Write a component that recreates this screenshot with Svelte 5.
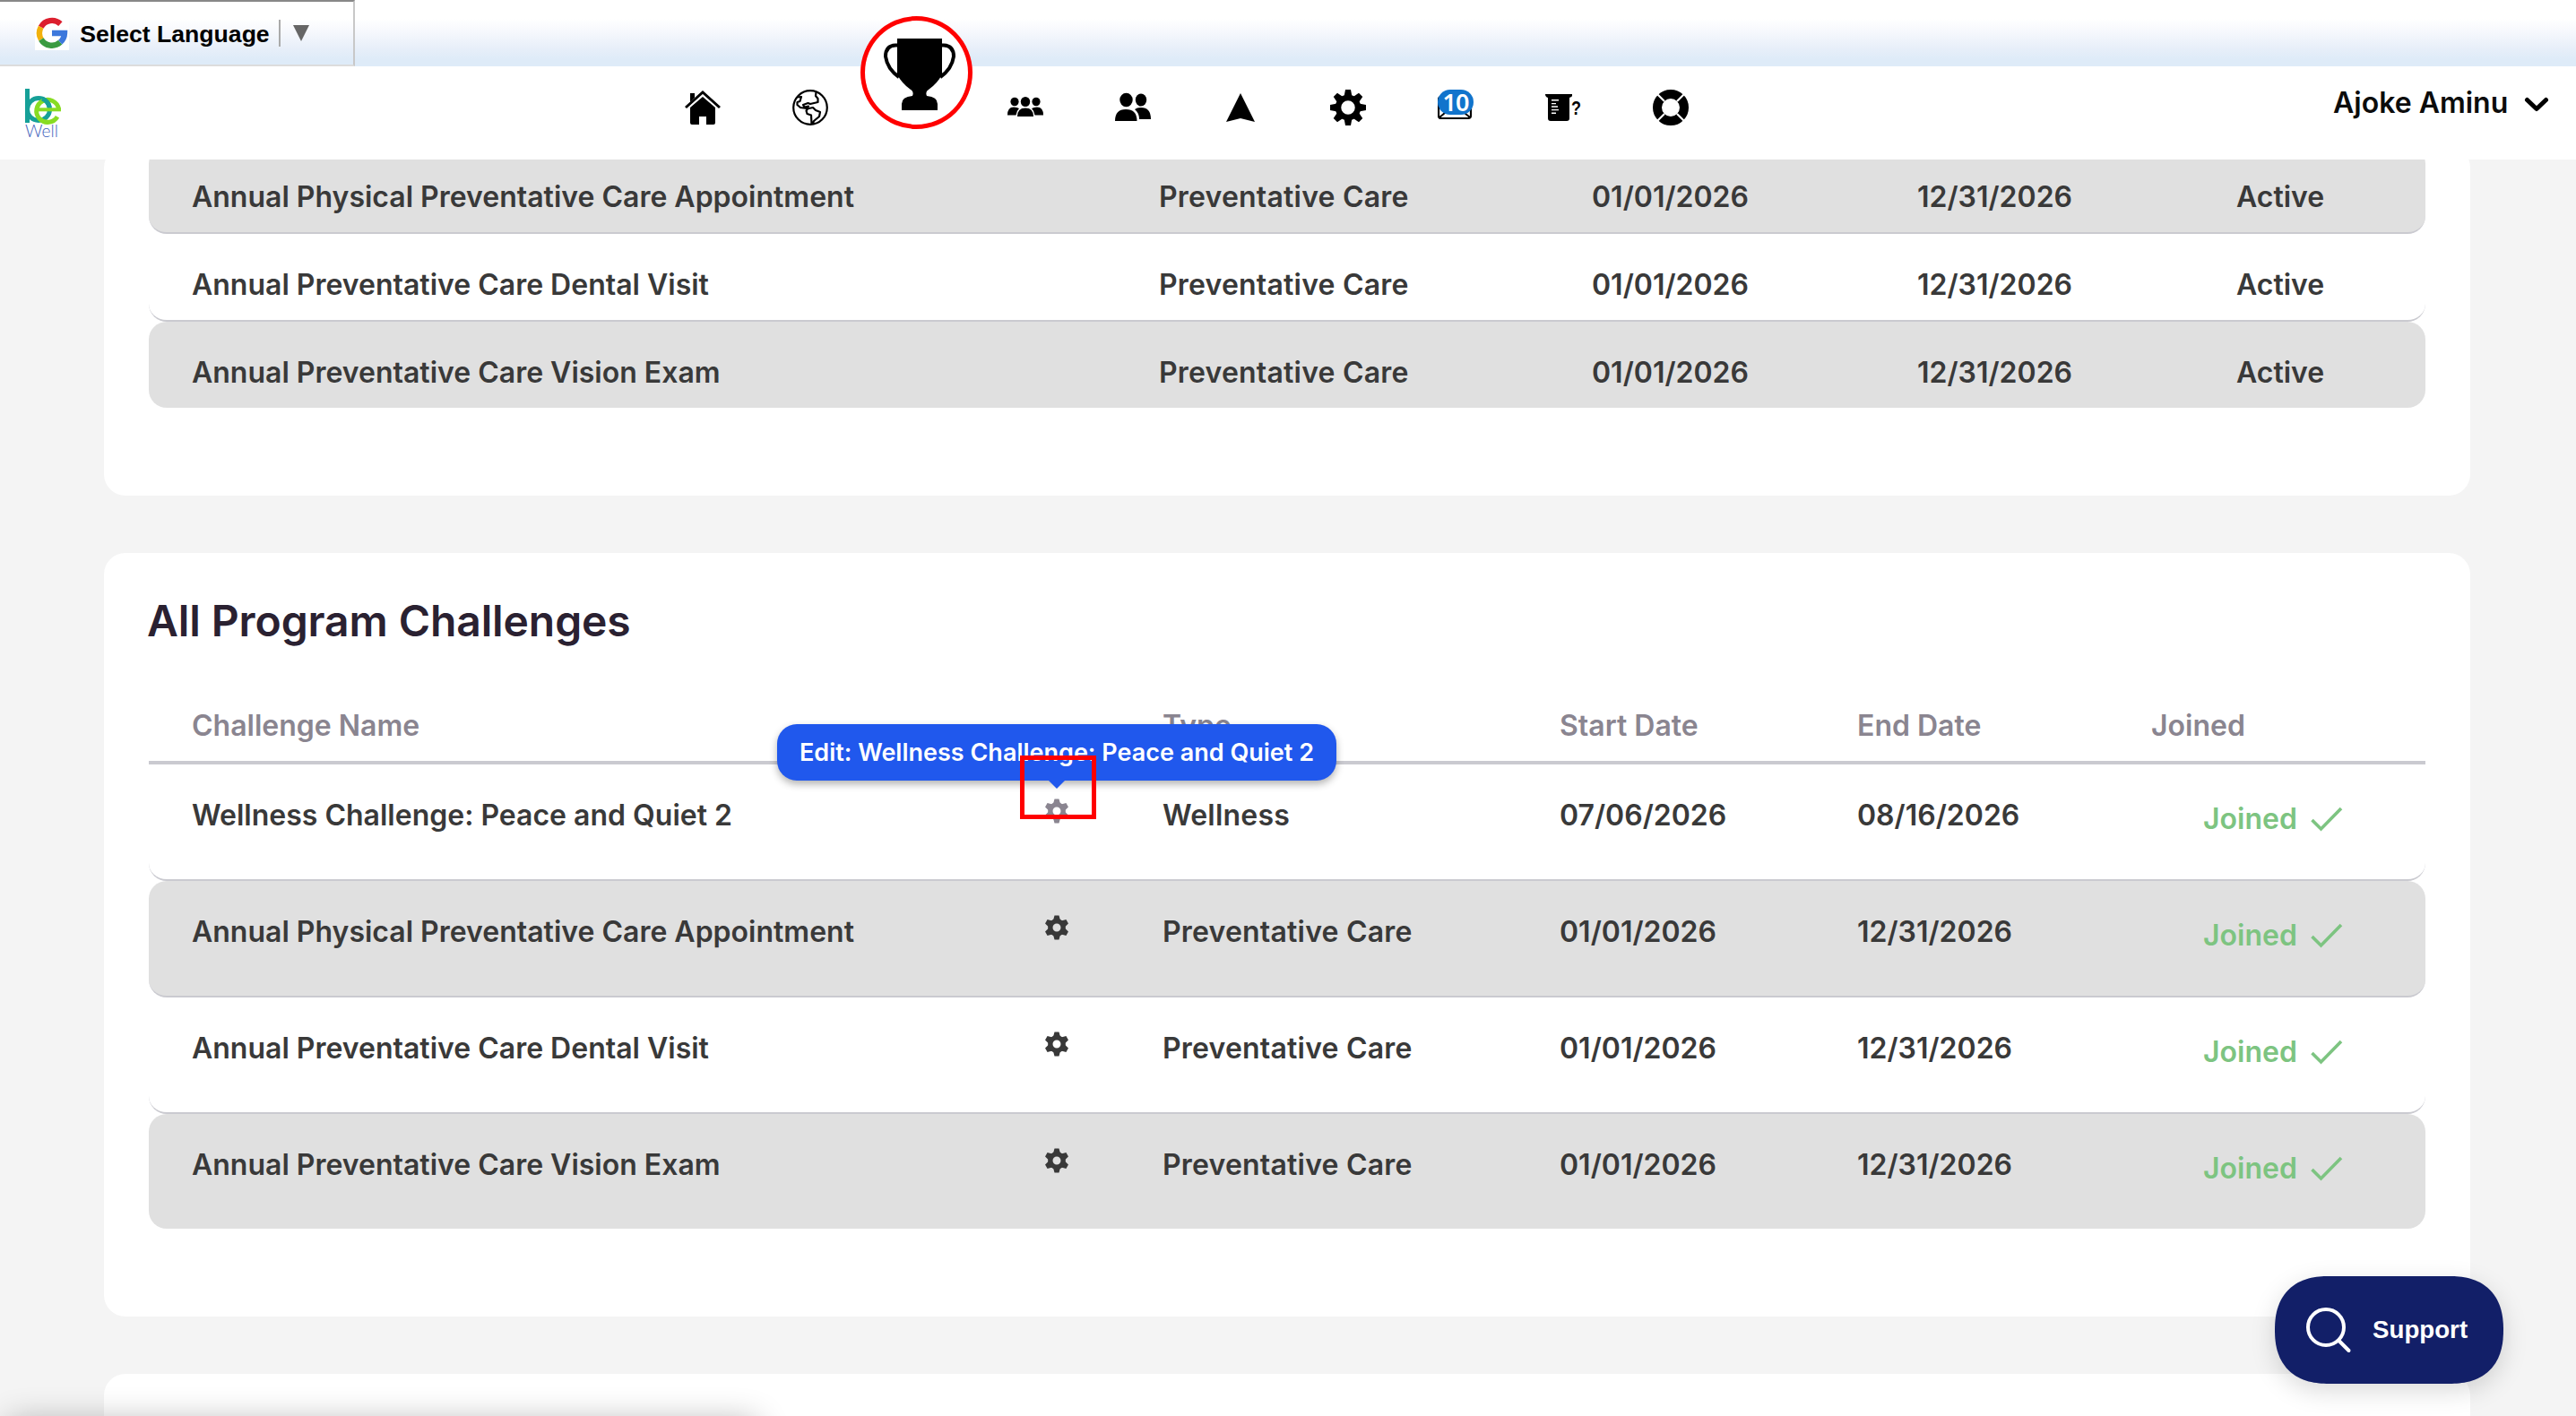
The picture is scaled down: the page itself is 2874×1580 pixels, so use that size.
<script>

    // Rows of the table that is scrolled under the header
    const current = [
        { name: "Annual Physical Preventative Care Appointment", type: "Preventative Care", start: "01/01/2026", end: "12/31/2026", status: "Active" },
        { name: "Annual Preventative Care Dental Visit", type: "Preventative Care", start: "01/01/2026", end: "12/31/2026", status: "Active" },
        { name: "Annual Preventative Care Vision Exam", type: "Preventative Care", start: "01/01/2026", end: "12/31/2026", status: "Active" }
    ];

    // Rows of the program table
    const challenges = [
        { name: "Wellness Challenge: Peace and Quiet 2", type: "Wellness", start: "07/06/2026", end: "08/16/2026", hovered: true },
        { name: "Annual Physical Preventative Care Appointment", type: "Preventative Care", start: "01/01/2026", end: "12/31/2026" },
        { name: "Annual Preventative Care Dental Visit", type: "Preventative Care", start: "01/01/2026", end: "12/31/2026" },
        { name: "Annual Preventative Care Vision Exam", type: "Preventative Care", start: "01/01/2026", end: "12/31/2026" }
    ];

    const gearTeeth = [0, 45, 90, 135, 180, 225, 270, 315];
    const cogTeeth = [0, 60, 120, 180, 240, 300];

</script>

<div class="page">

    <!-- Language bar -->
    <div class="language-bar">
        <button class="translate">
            <svg class="google" width="38" height="38" viewBox="0 0 38 38">
                <rect width="38" height="38" fill="#fff" />
                <g fill="none" stroke-width="6.4">
                    <path d="M28.4 8.6A14 14 0 0 0 6.7 12.2" stroke="#dc1f2e" />
                    <path d="M6.7 12.2A14 14 0 0 0 6.9 26" stroke="#f2b10c" />
                    <path d="M6.9 26A14 14 0 0 0 28.2 29.2" stroke="#3a9b41" />
                    <path d="M28.2 29.2A14 14 0 0 0 33 19H19" stroke="#3d78dc" />
                </g>
            </svg>
            <span class="label">Select Language</span>
            <span class="divider"></span>
            <svg width="18" height="18" viewBox="0 0 18 18"><path d="M0 0H18L9 18Z" fill="#666" /></svg>
        </button>
    </div>

    <!-- Header -->
    <header>

        <svg class="logo" width="44" height="58" viewBox="0 0 44 58">
            <g fill="none" stroke-width="5">
                <path d="M2.500 1V39" stroke="#16a098" />
                <circle cx="15" cy="24" r="12.500" stroke="#16a098" />
                <path d="M36 32.200A12.500 12.500 0 1 1 37.500 23.500" stroke="#88dc22" />
                <path d="M14 24.300H40" stroke="#88dc22" stroke-width="4" />
                <path d="M19 12.200A12.500 12.500 0 0 1 27.200 21.500" stroke="#16a098" />
            </g>
            <text x="0" y="54.500" textLength="37" lengthAdjust="spacingAndGlyphs">Well</text>
        </svg>

        <nav>

            <!-- Home -->
            <svg viewBox="0 0 40 40">
                <path d="M6 4h5v5l-5 5z" />
                <path d="M1 20L20 3L39 20" fill="none" stroke="#000" stroke-width="3" />
                <path d="M6 20L20 8L34 20V37Q34 39 32 39H24V30H16V39H8Q6 39 6 37Z" />
            </svg>

            <!-- Globe -->
            <svg viewBox="0 0 40 40">
                <g fill="none" stroke="#000" stroke-width="2.200" stroke-linejoin="round">
                    <circle cx="20" cy="20" r="18.800" />
                    <path d="M26.500 3L26 7L28.500 10V14L20 16L17.500 15L12 17L13.500 19.500L18 18.500L16 21L9 20L5.500 17V14L8.500 13L10 8L5 8.500" />
                    <path d="M16 21.500L23 20L26 23L31 25L30 30L24 35L22.500 38.500M21.500 38.500L21 28.500L16.500 27L15.500 23.500L17.500 21" />
                </g>
            </svg>

            <!-- Trophy -->
            <div class="highlight">
                <svg class="trophy" viewBox="0 0 80 80">
                    <path d="M15 0H65V40Q60 50 50 57Q46 59 48 64Q60 65 60 73V80H20V73Q20 65 32 64Q34 59 30 57Q20 50 15 40Z" />
                    <g fill="none" stroke="#000" stroke-width="4">
                        <path d="M17 7.500H13Q2 8 2 20Q4 34 17 43" />
                        <path d="M63 7.500H67Q78 8 78 20Q76 34 63 43" />
                    </g>
                </svg>
            </div>

            <!-- Teams -->
            <svg viewBox="0 0 40 40">
                <ellipse cx="8" cy="13.500" rx="4.600" ry="4.800" />
                <ellipse cx="32" cy="13.500" rx="4.600" ry="4.800" />
                <ellipse cx="20" cy="13.500" rx="5.200" ry="5.600" />
                <path d="M0 28.500Q0 19.500 7 19.500Q11 19.500 13 21Q10 24 9.500 28.500Z" />
                <path d="M40 28.500Q40 19.500 33 19.500Q29 19.500 27 21Q30 24 30.500 28.500Z" />
                <path d="M11 30Q11 20.500 20 20.500Q29 20.500 29 30Z" />
            </svg>

            <!-- Friends -->
            <svg viewBox="0 0 40 40">
                <ellipse cx="12.500" cy="11.500" rx="7.200" ry="7.800" />
                <ellipse cx="29" cy="11.500" rx="6.200" ry="7" />
                <path d="M0 35Q0 22 12 22Q24.500 22 24.500 35Z" />
                <path d="M22 22Q25 20 29 20Q40 20 40 33H27Q27 26 22 22Z" />
            </svg>

            <!-- Navigate -->
            <svg viewBox="0 0 40 40"><path d="M20 4L36 36L20 32L4 36Z" /></svg>

            <!-- Settings -->
            <svg viewBox="0 0 40 40">
                {#each gearTeeth as angle}
                    <path d="M15.500 8L17 0H23L24.500 8Z" transform="rotate({angle} 20 20)" />
                {/each}
                <circle cx="20" cy="20" r="11" fill="none" stroke="#000" stroke-width="6.500" />
            </svg>

            <!-- Messages -->
            <div class="messages">
                <svg viewBox="0 0 40 40">
                    <rect x="1" y="8" width="36" height="24" rx="3" fill="#fff" stroke="#000" stroke-width="2.200" />
                    <path d="M2 31L14 21M36 31L24 21" stroke="#000" stroke-width="2" />
                </svg>
                <span class="count">10</span>
            </div>

            <!-- Measurements -->
            <svg viewBox="0 0 40 40">
                <path d="M0 5H30V7Q30 8 27 9V32Q27 35 24 35H6Q3 35 3 32V9Q0 8 0 5Z" />
                <path d="M7 11.800H15M7 15.600H12M7 19H14M7 22.600H15M7 26.200H12" stroke="#fff" stroke-width="1.400" />
                <text class="question" x="29" y="28" textLength="11" lengthAdjust="spacingAndGlyphs">?</text>
            </svg>

            <!-- Help -->
            <svg viewBox="0 0 40 40">
                <circle cx="20" cy="20" r="15" fill="none" stroke="#000" stroke-width="10" />
                <path d="M5 5L13 13M35 5L27 13M5 35L13 27M35 35L27 27" stroke="#fff" stroke-width="2.200" />
            </svg>

        </nav>

        <!-- User menu -->
        <button class="user">
            <span>Ajoke Aminu</span>
            <svg width="28" height="18" viewBox="0 0 28 18"><path d="M3.500 3.500L14 13.500L24.500 3.500" fill="none" stroke="#000" stroke-width="5" stroke-linecap="round" stroke-linejoin="round" /></svg>
        </button>

    </header>

    <main>

        <!-- Current challenges -->
        <section class="card current">
            {#each current as item}
                <div class="row">
                    <span class="name">{item.name}</span>
                    <span class="type">{item.type}</span>
                    <span>{item.start}</span>
                    <span>{item.end}</span>
                    <span>{item.status}</span>
                </div>
            {/each}
        </section>

        <!-- All challenges -->
        <section class="card program">

            <h2>All Program Challenges</h2>

            <div class="row head">
                <span class="name">Challenge Name</span>
                <span></span>
                <span>Type</span>
                <span>Start Date</span>
                <span>End Date</span>
                <span>Joined</span>
            </div>

            {#each challenges as item}
                <div class="row">
                    <span class="name">{item.name}</span>
                    <span class="edit" class:hovered={item.hovered}>
                        <svg width="28" height="28" viewBox="0 0 28 28">
                            {#each cogTeeth as angle}
                                <path d="M10 6L11.500 .500H16.500L18 6Z" transform="rotate({angle} 14 14)" />
                            {/each}
                            <circle cx="14" cy="14" r="7.200" fill="none" stroke="currentColor" stroke-width="5.400" />
                        </svg>
                        {#if item.hovered}
                            <span class="tooltip">Edit: {item.name}</span>
                            <span class="marker"></span>
                        {/if}
                    </span>
                    <span class="type">{item.type}</span>
                    <span>{item.start}</span>
                    <span>{item.end}</span>
                    <span class="joined">
                        Joined
                        <svg width="36" height="28" viewBox="0 0 36 28"><path d="M1.500 15L11.500 25L34 2" fill="none" stroke="currentColor" stroke-width="3.600" /></svg>
                    </span>
                </div>
            {/each}

        </section>

        <!-- Next card -->
        <section class="card next"></section>

    </main>

    <!-- Shade at the bottom edge -->
    <div class="bottom-shade"></div>

    <!-- Support -->
    <button class="support">
        <svg width="54" height="54" viewBox="0 0 54 54">
            <circle cx="24" cy="24" r="20" />
            <path d="M38.500 39L49.500 50" />
        </svg>
        <span>Support</span>
    </button>

</div>

<style>

    :global(body) {
        background: #f4f4f4;
    }

    button {
        border: 0;
        padding: 0;
        background: none;
        font: inherit;
        color: inherit;
    }

    .page {
        position: relative;
        width: 2874px;
        height: 1580px;
        overflow: hidden;
        display: flex;
        flex-direction: column;
        background: #f4f4f4;
        color: #393939;
        font: 600 32px/40px Inter, "Noto Sans", sans-serif;
    }

    /* Language bar */
    .language-bar {
        height: 74px;
        background: linear-gradient(#fff 28%, #f7f9fd 46%, #e8eff9 72%, #deebf8 90%);
    }

    .translate {
        display: flex;
        align-items: center;
        box-sizing: border-box;
        width: 396px;
        height: 74px;
        padding-left: 39px;
        border: 2px solid #888;
        border-left: 0;
        border-color: #888 #c8c8c8 #dcdcdc;
    }

    .label {
        width: 212px;
        margin-left: 12px;
        padding-top: 2px;
        color: #000;
        font: bold 26.600px/40px "Liberation Sans", Arial, sans-serif;
        white-space: nowrap;
    }

    .divider {
        width: 2px;
        height: 30px;
        margin: 0 14px 0 10px;
        background: #aaa;
    }

    /* Header */
    header {
        display: flex;
        height: 104px;
        flex: none;
        background: #fff;
    }

    .logo {
        margin: 24px 0 0 28px;
    }

    .logo text {
        font: 300 20px Lato, sans-serif;
        fill: #3f63bd;
    }

    nav {
        display: flex;
        gap: 80px;
        margin: 26px 0 0 692px;
        height: 40px;
    }

    nav svg {
        width: 40px;
        height: 40px;
        display: block;
    }

    /* Active item is enlarged and circled */
    .highlight {
        position: relative;
        top: -82px;
        box-sizing: border-box;
        width: 125px;
        height: 126px;
        margin: 0 -41px 0 -44px;
        border: 5px solid #f00;
        border-radius: 50%;
        background: #fff;
    }

    .highlight .trophy {
        width: 80px;
        height: 80px;
        margin: 20px 0 0 21px;
    }

    .messages {
        position: relative;
    }

    .count {
        position: absolute;
        top: 0;
        left: 0;
        width: 40px;
        height: 28px;
        border-radius: 14px;
        background: #1174cc;
        color: #fff;
        text-align: center;
        letter-spacing: -1px;
        font: 600 27px/28px "Noto Sans", sans-serif;
    }

    .question {
        font: bold 22px "Liberation Sans", sans-serif;
    }

    .user {
        display: flex;
        align-items: flex-start;
        margin-left: auto;
        padding: 21px 30px 0 0;
        color: #0c0c0c;
    }

    .user span {
        width: 213px;
        text-align: left;
        white-space: nowrap;
    }

    .user svg {
        margin-top: 13px;
    }

    /* Cards */
    main {
        flex: 1;
        overflow: hidden;
        padding: 0 118px 0 116px;
    }

    .card {
        box-sizing: border-box;
        padding: 0 50px;
        margin-bottom: 64px;
        border-radius: 24px;
        background: #fff;
    }

    .current {
        height: 390px;
        margin-top: -15px;
    }

    .program {
        height: 852px;
    }

    .next {
        height: 200px;
    }

    h2 {
        margin: 0 0 0 -2px;
        padding: 46px 0 0;
        height: 126px;
        line-height: 60px;
        font-size: 48px;
        font-weight: 600;
        letter-spacing: -.1px;
        color: #2a2131;
    }

    /* Rows */
    .row {
        display: grid;
        box-sizing: border-box;
        padding-top: 37px;
        border-bottom: 2px solid #cacad0;
        border-radius: 20px;
        white-space: nowrap;
    }

    .row:last-child {
        border-bottom: 0;
    }

    .current .row {
        grid-template-columns: 1127px 483px 363px 356px 1fr;
        height: 98px;
    }

    .current .row:last-child {
        height: 96px;
    }

    .program .row {
        grid-template-columns: 999px 132px 443px 332px 328px 1fr;
        height: 130px;
    }

    .program .row:last-child {
        height: 128px;
    }

    .current .row:nth-child(odd),
    .program .row:nth-child(even):not(.head) {
        background: #e0e0e0;
    }

    .program .head {
        height: 64px;
        padding-top: 1px;
        border-bottom-width: 4px;
        border-radius: 0;
        color: #8a8590;
    }

    .name {
        padding-left: 48px;
    }

    .type {
        letter-spacing: .2px;
    }

    /* Edit action */
    .edit {
        position: relative;
        height: 28px;
        margin-top: 1px;
        fill: currentColor;
    }

    .edit svg {
        display: block;
    }

    .hovered {
        color: #8a8590;
    }

    .tooltip {
        position: absolute;
        left: -298px;
        top: -83px;
        z-index: 1;
        box-sizing: border-box;
        width: 624px;
        height: 63px;
        border-radius: 22px;
        background: #2058ed;
        box-shadow: 0 4px 8px rgba(0, 0, 0, .3);
        color: #fff;
        text-align: center;
        font-size: 27px;
        line-height: 63px;
    }

    .tooltip::after {
        content: "";
        position: absolute;
        left: 302px;
        top: 62px;
        border: 10px solid transparent;
        border-top-color: #2058ed;
        border-bottom: 0;
    }

    .marker {
        position: absolute;
        left: -27px;
        top: -48px;
        z-index: 2;
        box-sizing: border-box;
        width: 85px;
        height: 71px;
        border: 5px solid #f00;
    }

    .joined {
        display: flex;
        gap: 15px;
        padding: 4px 0 0 58px;
        color: #7dc481;
    }

    .joined svg {
        margin-top: 6px;
    }

    /* Shade */
    .bottom-shade {
        position: absolute;
        left: 10px;
        top: 1586px;
        width: 834px;
        height: 40px;
        box-shadow: 0 0 36px rgba(0, 0, 0, .3);
    }

    /* Support */
    .support {
        position: absolute;
        left: 2538px;
        top: 1424px;
        display: flex;
        align-items: center;
        width: 255px;
        height: 120px;
        padding-left: 33px;
        border-radius: 60px;
        corner-shape: superellipse(1.25);
        background: #121f68;
        box-shadow: 0 8px 28px rgba(0, 0, 0, .15);
        color: #fff;
        font: bold 27.700px/40px "Liberation Sans", Arial, sans-serif;
    }

    .support svg {
        margin-right: 22px;
        fill: none;
        stroke: #fff;
        stroke-width: 4;
        stroke-linecap: round;
    }

</style>
